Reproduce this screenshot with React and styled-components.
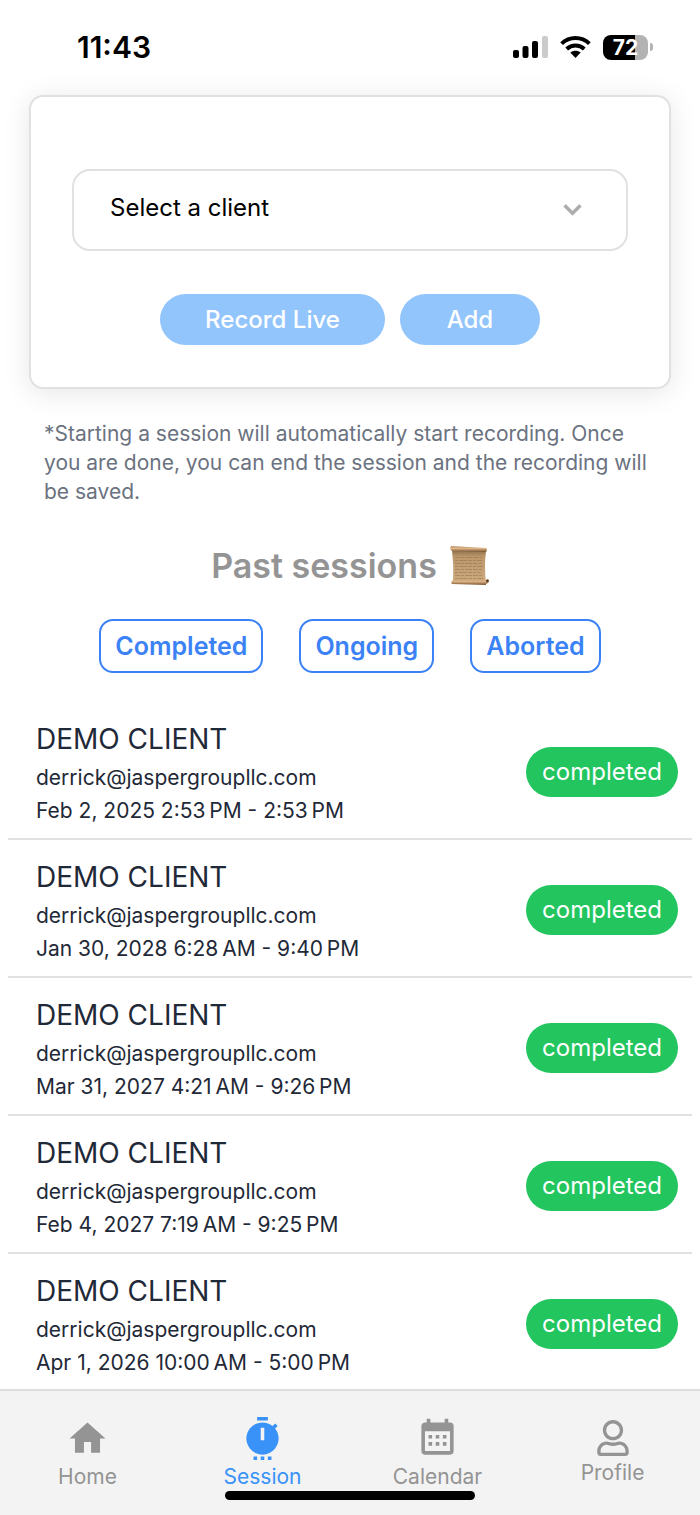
import { useState } from "react";
import styled, { createGlobalStyle } from "styled-components";
import { FaRegUser } from "react-icons/fa";

const GlobalStyle = createGlobalStyle`
    * {
        box-sizing: border-box;
    }

    body {
        margin: 0;
        background: #fff;
        font-family: Inter, "Liberation Sans", sans-serif;
    }

    h1, h2, p, ul {
        margin: 0;
        padding: 0;
    }

    button, select {
        font-family: inherit;
    }
`;

const Screen = styled.div`
    display: flex;
    flex-direction: column;
    height: 100vh;
`;

const StatusBar = styled.header`
    display: flex;
    align-items: center;
    justify-content: space-between;
    flex-shrink: 0;
    height: 65px;
    padding: 29px 47px 0 77px;
`;

const Clock = styled.time`
    font-size: 30px;
    font-weight: 600;
    line-height: 36px;
`;

const StatusIcons = styled.div`
    display: flex;
    align-items: center;
    gap: 12px;

    svg {
        display: block;
    }
`;

const Battery = styled.div`
    display: flex;
    align-items: center;
    gap: 2px;
`;

const BatteryLevel = styled.span`
    width: 45px;
    border-radius: 8px;
    background: linear-gradient(to right, #000 72%, #b3b3b3 72%);
    color: #fff;
    font-size: 21px;
    font-weight: 700;
    line-height: 25px;
    text-align: center;
`;

const BatteryCap = styled.span`
    width: 3px;
    height: 8px;
    border-radius: 0 4px 4px 0;
    background: #b3b3b3;
`;

/* the top padding leaves room for the card shadow inside the scroll area */
const Content = styled.main`
    flex: 1;
    min-height: 0;
    padding-top: 30px;
    overflow-y: auto;
    scrollbar-width: none;
`;

const Card = styled.section`
    margin: 0 29px;
    padding: 72px 41px 42px;
    border: 2px solid #e1e1e1;
    border-radius: 14px;
    background: #fff;
    box-shadow: 0 4px 28px rgba(0, 0, 0, 0.1);
`;

const SelectBox = styled.div`
    position: relative;

    svg {
        position: absolute;
        top: 23px;
        right: 38px;
        pointer-events: none;
    }
`;

const ClientSelect = styled.select`
    display: block;
    width: 100%;
    height: 82px;
    padding: 0 72px 6px 36px;
    border: 2px solid #e1e1e1;
    border-radius: 18px;
    background: #fff;
    color: #000;
    font-size: 24px;
    appearance: none;
`;

const Actions = styled.div`
    display: flex;
    justify-content: center;
    gap: 15px;
    margin-top: 43px;
`;

const ActionButton = styled.button`
    min-width: 140px;
    height: 51px;
    padding: 0 45px;
    border: none;
    border-radius: 26px;
    background: #93c5fd;
    color: #fff;
    font-size: 24px;
    font-weight: 500;
`;

const Notice = styled.p`
    padding: 30px 40px 0 44px;
    color: #6b7280;
    font-size: 21px;
    line-height: 29px;
`;

const Title = styled.h2`
    display: flex;
    align-items: center;
    justify-content: center;
    gap: 12px;
    margin-top: 37px;
    color: #949494;
    font-size: 34px;
    font-weight: 600;
    line-height: 46px;
`;

const Filters = styled.div`
    display: flex;
    justify-content: center;
    gap: 36px;
    margin-top: 30px;
`;

const FilterButton = styled.button`
    height: 54px;
    padding: 0 14px;
    border: 2px solid #3b82f6;
    border-radius: 14px;
    background: #fff;
    color: #3b82f6;
    font-size: 25px;
    font-weight: 600;
`;

const SessionList = styled.ul`
    margin: 29px 8px 0;
    list-style: none;
`;

const SessionRow = styled.li`
    display: flex;
    align-items: center;
    justify-content: space-between;
    padding: 15px 14px 11px 28px;
    border-bottom: 2px solid #e1e1e1;
    color: #1f2937;
`;

const ClientName = styled.p`
    font-size: 28px;
    line-height: 44px;
`;

const Detail = styled.p`
    font-size: 21px;
    line-height: 33px;
`;

const StatusBadge = styled.span`
    padding: 0 16px;
    border-radius: 25px;
    background: #22c55e;
    color: #fff;
    font-size: 24px;
    line-height: 50px;
`;

const TabBar = styled.nav`
    position: relative;
    display: grid;
    grid-template-columns: repeat(4, 1fr);
    flex-shrink: 0;
    height: 126px;
    padding-top: 26px;
    border-top: 2px solid #dedede;
    background: #f3f3f3;
`;

const Tab = styled.a`
    display: flex;
    flex-direction: column;
    align-items: center;
    gap: 5px;
    color: ${(props) => (props.$active ? "#3892f8" : "#949494")};
    font-size: 21px;
    line-height: 24px;
    text-decoration: none;
`;

const ProfileIcon = styled(FaRegUser)`
    width: 32px;
    height: 36px;
    margin-top: 3px;
`;

const HomeIndicator = styled.div`
    position: absolute;
    bottom: 15px;
    left: 50%;
    width: 250px;
    height: 9px;
    border-radius: 5px;
    background: #000;
    transform: translateX(-50%);
`;

const SignalIcon = () => (
    <svg width="35" height="24" viewBox="0 0 35 24">
        <rect x="0" y="15" width="6" height="8" rx="2" />
        <rect x="9.5" y="11" width="6" height="12" rx="2" />
        <rect x="19" y="6" width="6" height="17" rx="2" />
        <rect x="29" y="1" width="6" height="22" rx="2" fill="#cbcbcb" />
    </svg>
);

const WifiIcon = () => (
    <svg width="31" height="24" viewBox="0 0 31 24">
        <g fill="none" stroke="#000" strokeWidth="4">
            <path d="M1.6 8.6C9.4 1.2 21.6 1.2 29.4 8.6" />
            <path d="M6.7 14C11.7 9.3 19.3 9.3 24.3 14" />
        </g>
        <path d="M10.3 17.6C13.3 15 17.7 15 20.7 17.6L15.5 23z" />
    </svg>
);

const ChevronIcon = () => (
    <svg width="35" height="35" viewBox="0 0 24 24" fill="#ababab" stroke="#ababab" strokeWidth="0.5">
        <path d="M7.41 8.59L12 13.17l4.59-4.58L18 10l-6 6-6-6z" />
    </svg>
);

const ScrollIcon = () => (
    <svg width="40" height="42" viewBox="0 0 40 42">
        <defs>
            <linearGradient id="paper" x1="0" y1="0" x2="0" y2="1">
                <stop offset="0" stopColor="#8d6c48" />
                <stop offset="0.2" stopColor="#bb976b" />
                <stop offset="1" stopColor="#cfac80" />
            </linearGradient>
            <linearGradient id="roll" x1="0" y1="0" x2="0" y2="1">
                <stop offset="0" stopColor="#b98f60" />
                <stop offset="0.4" stopColor="#dfb78a" />
                <stop offset="1" stopColor="#76512f" />
            </linearGradient>
        </defs>
        <path d="M3 5L37 6Q35 21 37 38L4 37Q5 21 3 5z" fill="url(#paper)" />
        <g stroke="#92714b" strokeWidth="1" opacity="0.5">
            <path d="M6 12.5h28M6 18.5h27M6 24.5h28M6 30.5h27" strokeDasharray="5 1 3 1 7 1" />
            <path d="M6 15.5h27M6 21.5h28M6 27.5h26M6 33.5h28" strokeDasharray="3 1 8 1 4 1" />
        </g>
        <path d="M2 1L37 3Q39 4 37 7L3 6Q0 4 2 1z" fill="url(#roll)" />
        <path d="M4 35L37 35 39 34Q41 36 39 38L37 39V40L3 39Q1 37 4 35z" fill="url(#roll)" />
        <circle cx="38.4" cy="36" r="1.4" fill="#5e3d22" />
    </svg>
);

const TabIcon = ({ d }) => (
    <svg width="43" height="43" viewBox="0 0 24 24" fill="currentColor">
        <path fillRule="evenodd" d={d} />
    </svg>
);

const HOME = "M10 20v-6h4v6h5v-8h3L12 3 2 12h3v8z";
const TIMER =
    "M9 0h6v2H9zM7 22h2v2H7zM11 22h2v2h-2zM15 22h2v2h-2zM19.03 6.39l1.42-1.42c-.43-.51-.9-.99-1.41-1.41l-1.42 1.42C16.07 3.74 14.12 3 12 3a9 9 0 1 0 7.03 3.39zM11 6h2v7h-2z";
const CALENDAR =
    "M9 10v2H7v-2h2m4 0v2h-2v-2h2m4 0v2h-2v-2h2m2-7a2 2 0 0 1 2 2v14a2 2 0 0 1-2 2H5a2 2 0 0 1-2-2V5c0-1.11.9-2 2-2h1V1h2v2h8V1h2v2h1m0 16V8H5v11h14M9 14v2H7v-2h2m4 0v2h-2v-2h2m4 0v2h-2v-2h2z";

const tabs = [
    { label: "Home", icon: <TabIcon d={HOME} /> },
    { label: "Session", icon: <TabIcon d={TIMER} /> },
    { label: "Calendar", icon: <TabIcon d={CALENDAR} /> },
    { label: "Profile", icon: <ProfileIcon /> },
];

const sessions = [
    { id: 1, time: "Feb 2, 2025 2:53\u202fPM - 2:53\u202fPM" },
    { id: 2, time: "Jan 30, 2028 6:28\u202fAM - 9:40\u202fPM" },
    { id: 3, time: "Mar 31, 2027 4:21\u202fAM - 9:26\u202fPM" },
    { id: 4, time: "Feb 4, 2027 7:19\u202fAM - 9:25\u202fPM" },
    { id: 5, time: "Apr 1, 2026 10:00\u202fAM - 5:00\u202fPM" },
];

const App = () => {
    const [client, setClient] = useState("");

    return (
        <Screen>
            <GlobalStyle />
            <StatusBar>
                <Clock>11:43</Clock>
                <StatusIcons>
                    <SignalIcon />
                    <WifiIcon />
                    <Battery>
                        <BatteryLevel>72</BatteryLevel>
                        <BatteryCap />
                    </Battery>
                </StatusIcons>
            </StatusBar>

            <Content>
                <Card>
                    <SelectBox>
                        <ClientSelect
                            aria-label="Select a client"
                            value={client}
                            onChange={(e) => setClient(e.target.value)}
                        >
                            <option value="">Select a client</option>
                            <option value="demo">DEMO CLIENT</option>
                        </ClientSelect>
                        <ChevronIcon />
                    </SelectBox>
                    <Actions>
                        <ActionButton type="button">Record Live</ActionButton>
                        <ActionButton type="button">Add</ActionButton>
                    </Actions>
                </Card>

                <Notice>
                    *Starting a session will automatically start recording. Once you are done, you can
                    end the session and the recording will be saved.
                </Notice>

                <Title>
                    Past sessions
                    <ScrollIcon />
                </Title>
                <Filters>
                    <FilterButton type="button">Completed</FilterButton>
                    <FilterButton type="button">Ongoing</FilterButton>
                    <FilterButton type="button">Aborted</FilterButton>
                </Filters>

                <SessionList>
                    {sessions.map((session) => (
                        <SessionRow key={session.id}>
                            <div>
                                <ClientName>DEMO CLIENT</ClientName>
                                <Detail>derrick@jaspergroupllc.com</Detail>
                                <Detail>{session.time}</Detail>
                            </div>
                            <StatusBadge>completed</StatusBadge>
                        </SessionRow>
                    ))}
                </SessionList>
            </Content>

            <TabBar>
                {tabs.map((tab) => (
                    <Tab key={tab.label} href="#" $active={tab.label === "Session"}>
                        {tab.icon}
                        {tab.label}
                    </Tab>
                ))}
                <HomeIndicator />
            </TabBar>
        </Screen>
    );
};

export default App;
